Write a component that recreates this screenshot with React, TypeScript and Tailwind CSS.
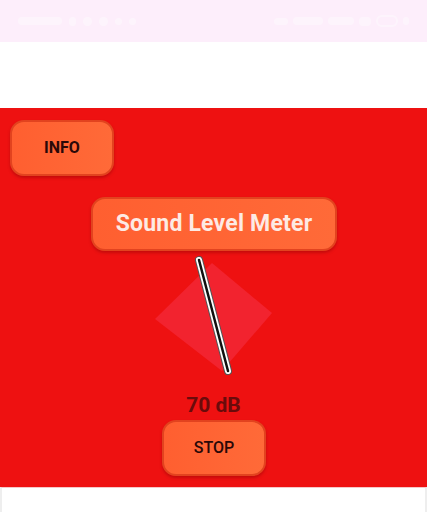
import React from 'react';

const btn =
  'rounded-[14px] border-2 border-[#e2431f] bg-gradient-to-r from-[#ff5f30] to-[#ff6a38] shadow-[0_2px_3px_rgba(120,0,0,0.35)] flex items-center justify-center';

function StatusBar() {
  return (
    <div className="h-[42px] bg-[#fdeefb] flex items-center justify-between px-[18px]">
      <div className="flex items-center gap-[7px] opacity-40">
        <div className="h-[8px] w-[44px] rounded-sm bg-white" />
        <div className="h-[9px] w-[7px] rounded-sm bg-white" />
        <div className="h-[9px] w-[9px] rounded-full bg-white" />
        <div className="h-[9px] w-[9px] rounded-full bg-white" />
        <div className="h-[7px] w-[7px] rounded-sm bg-white" />
        <div className="h-[7px] w-[7px] rounded-full bg-white" />
      </div>
      <div className="flex items-center gap-[5px] opacity-40">
        <div className="h-[7px] w-[14px] rounded-sm bg-white" />
        <div className="h-[8px] w-[30px] rounded-sm bg-white" />
        <div className="h-[8px] w-[26px] rounded-sm bg-white" />
        <div className="h-[9px] w-[12px] rounded-sm bg-white" />
        <div className="h-[12px] w-[22px] rounded-full border-2 border-white" />
        <div className="h-[8px] w-[6px] rounded-sm bg-white" />
      </div>
    </div>
  );
}

function Gauge() {
  return (
    <svg width="427" height="125" viewBox="0 0 427 125" className="block">
      <polygon points="155,68 212,12 272,62 222,120" fill="#f2232f" />
      <line x1="199" y1="9" x2="228" y2="120" stroke="#555" strokeWidth="8" strokeLinecap="round" />
      <line x1="199" y1="9" x2="228" y2="120" stroke="#fff" strokeWidth="6" strokeLinecap="round" />
      <line x1="199" y1="9" x2="228" y2="120" stroke="#111" strokeWidth="2.5" strokeLinecap="round" />
    </svg>
  );
}

export default function App() {
  return (
    <div className="w-[427px] h-[512px] overflow-hidden bg-white font-['Roboto','Liberation_Sans',sans-serif]">
      <StatusBar />
      <div className="h-[66px] bg-white" />
      <div className="h-[379px] bg-[#ee1111] flex flex-col">
        <div className="pl-[10px] pt-[12px]">
          <div className={`${btn} w-[104px] h-[56px]`}>
            <span className="text-[16px] font-bold text-[#2a0808]">INFO</span>
          </div>
        </div>
        <div className="flex justify-center mt-[21px]">
          <div className={`${btn} w-[246px] h-[54px] rounded-[12px] ml-[1px]`}>
            <span className="text-[23px] font-bold text-[#fdeae4] tracking-[0.2px]">Sound Level Meter</span>
          </div>
        </div>
        <Gauge />
        <div className="flex justify-center mt-[17px]">
          <span className="text-[21px] leading-[24px] font-bold text-[#6a0b0b]">70 dB</span>
        </div>
        <div className="flex justify-center mt-[3px]">
          <div className={`${btn} w-[104px] h-[56px] ml-[1px]`}>
            <span className="text-[16px] font-medium text-[#2a0808]">STOP</span>
          </div>
        </div>
      </div>
      <div className="h-[25px] bg-white border-x-2 border-[#eeeeee] border-t border-t-[#f6c8c8]" />
    </div>
  );
}
